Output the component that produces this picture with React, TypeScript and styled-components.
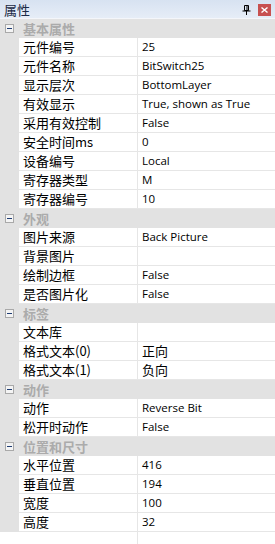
import { createGlobalStyle, styled } from 'styled-components';

const GlobalStyle = createGlobalStyle`
  html, body {
    margin: 0;
    padding: 0;
    background: #fff;
  }
  body {
    font-family: "Noto Sans CJK SC", "Noto Sans", sans-serif;
  }
`;

type Item = { name: string; value?: string };
type Group = { title: string; items: Item[] };

const groups: Group[] = [
  {
    title: '基本属性',
    items: [
      { name: '元件编号', value: '25' },
      { name: '元件名称', value: 'BitSwitch25' },
      { name: '显示层次', value: 'BottomLayer' },
      { name: '有效显示', value: 'True, shown as True' },
      { name: '采用有效控制', value: 'False' },
      { name: '安全时间ms', value: '0' },
      { name: '设备编号', value: 'Local' },
      { name: '寄存器类型', value: 'M' },
      { name: '寄存器编号', value: '10' },
    ],
  },
  {
    title: '外观',
    items: [
      { name: '图片来源', value: 'Back Picture' },
      { name: '背景图片' },
      { name: '绘制边框', value: 'False' },
      { name: '是否图片化', value: 'False' },
    ],
  },
  {
    title: '标签',
    items: [
      { name: '文本库' },
      { name: '格式文本(0)', value: '正向' },
      { name: '格式文本(1)', value: '负向' },
    ],
  },
  {
    title: '动作',
    items: [
      { name: '动作', value: 'Reverse Bit' },
      { name: '松开时动作', value: 'False' },
    ],
  },
  {
    title: '位置和尺寸',
    items: [
      { name: '水平位置', value: '416' },
      { name: '垂直位置', value: '194' },
      { name: '宽度', value: '100' },
      { name: '高度', value: '32' },
    ],
  },
];

const isCjk = (s: string) => /[\u4e00-\u9fff]/.test(s);

export default function App() {
  return (
    <>
      <GlobalStyle />
      <Panel>
        <TitleBar>
          <TitleText>属性</TitleText>
          <PinButton>
            <svg width="9" height="10" viewBox="0 0 9 10">
              <path d="M2.5 0.5h4v5h-4z" fill="none" stroke="#000" />
              <path d="M5 1v4.5" stroke="#000" />
              <path d="M0.5 6h8" stroke="#000" />
              <path d="M4.5 6v4" stroke="#000" />
            </svg>
          </PinButton>
          <CloseButton>
            <svg width="7" height="6" viewBox="0 0 7 6">
              <path d="M0.5 0.5l6 5M6.5 0.5l-6 5" stroke="#fff" strokeWidth="1.4" />
            </svg>
          </CloseButton>
        </TitleBar>
        <Grid>
          {groups.map((g) => (
            <div key={g.title}>
              <GroupRow>
                <Toggle>
                  <svg width="9" height="9" viewBox="0 0 9 9">
                    <rect x="0.5" y="0.5" width="8" height="8" fill="#f4f4f4" stroke="#a9a9a9" />
                    <path d="M2 4.5h5" stroke="#1f3d73" />
                  </svg>
                </Toggle>
                <GroupTitle>{g.title}</GroupTitle>
              </GroupRow>
              {g.items.map((it) => (
                <Row key={it.name}>
                  <Margin />
                  <NameCell>{it.name}</NameCell>
                  <ValueCell $cjk={isCjk(it.value ?? '')}>{it.value ?? ''}</ValueCell>
                </Row>
              ))}
            </div>
          ))}
          <Filler>
            <FillerLeft />
          </Filler>
        </Grid>
      </Panel>
    </>
  );
}

const Panel = styled.div`
  width: 275px;
  height: 544px;
  display: flex;
  flex-direction: column;
  background: #fff;
  overflow: hidden;
`;

const TitleBar = styled.div`
  height: 19px;
  flex: none;
  display: flex;
  align-items: center;
  padding: 0 4px 0 4px;
  box-sizing: border-box;
  background: linear-gradient(#d7e2f1, #e6edf7);
  border-bottom: 1px solid #f4f6fa;
`;

const TitleText = styled.span`
  flex: 1;
  font-size: 13px;
  color: #1b2a45;
  line-height: 17px;
`;

const PinButton = styled.span`
  width: 10px;
  height: 12px;
  display: flex;
  align-items: center;
  justify-content: center;
  margin-right: 7px;
  margin-top: 2px;
`;

const CloseButton = styled.span`
  width: 13px;
  height: 12px;
  display: flex;
  align-items: center;
  justify-content: center;
  background: #c75050;
  margin-top: 1px;
`;

const Grid = styled.div`
  flex: 1;
  display: flex;
  flex-direction: column;
`;

const GroupRow = styled.div`
  height: 19px;
  display: flex;
  align-items: center;
  background: #e2e2e2;
`;

const Toggle = styled.span`
  width: 19px;
  display: flex;
  justify-content: center;
`;

const GroupTitle = styled.span`
  padding-left: 4px;
  font-size: 13px;
  font-weight: bold;
  color: #ababab;
`;

const Row = styled.div`
  height: 19px;
  display: flex;
`;

const Margin = styled.div`
  width: 19px;
  flex: none;
  background: #e2e2e2;
`;

const NameCell = styled.div`
  width: 119px;
  flex: none;
  box-sizing: border-box;
  padding-left: 4px;
  border-right: 1px solid #e6e6e6;
  border-bottom: 1px solid #e6e6e6;
  font-size: 13px;
  line-height: 18px;
  color: #000;
  white-space: nowrap;
`;

const ValueCell = styled.div<{ $cjk: boolean }>`
  flex: 1;
  box-sizing: border-box;
  padding-left: 4px;
  border-bottom: 1px solid #e6e6e6;
  font-family: ${(p) => (p.$cjk ? '"Noto Sans CJK SC", sans-serif' : '"Open Sans", "Noto Sans CJK SC", sans-serif')};
  font-size: ${(p) => (p.$cjk ? '13px' : '11.5px')};
  line-height: 18px;
  color: #000;
  white-space: nowrap;
`;

const Filler = styled.div`
  flex: 1;
  display: flex;
`;

const FillerLeft = styled.div`
  width: 138px;
  box-sizing: border-box;
  border-right: 1px solid #e6e6e6;
`;
